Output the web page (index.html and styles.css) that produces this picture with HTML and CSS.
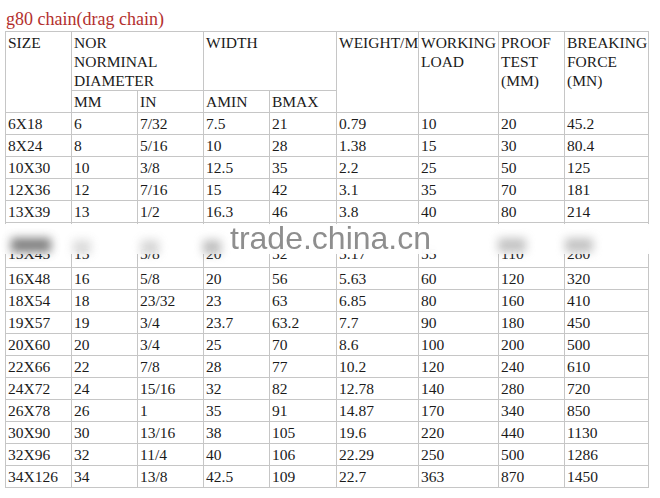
FILE: index.html
```html
<!DOCTYPE html>
<html>
<head>
<meta charset="utf-8">
<link rel="stylesheet" href="styles.css">
</head>
<body>
<div class="title">g80 chain(drag chain)</div>
<div class="sheet">
<table class="spec">
<colgroup>
<col class="c66"><col class="c66"><col class="c66"><col class="c66"><col class="c67"><col class="c82"><col class="c80"><col class="c66"><col class="c84">
</colgroup>
<tr class="h1">
<td rowspan="2">SIZE</td>
<td colspan="2">NOR<br>NORMINAL<br>DIAMETER</td>
<td colspan="2">WIDTH</td>
<td rowspan="2">WEIGHT/M</td>
<td rowspan="2">WORKING<br>LOAD</td>
<td rowspan="2">PROOF<br>TEST<br>(MM)</td>
<td rowspan="2">BREAKING<br>FORCE<br>(MN)</td>
</tr>
<tr class="h2"><td>MM</td><td>IN</td><td>AMIN</td><td>BMAX</td></tr>
<tr><td>6X18</td><td>6</td><td>7/32</td><td>7.5</td><td>21</td><td>0.79</td><td>10</td><td>20</td><td>45.2</td></tr>
<tr><td>8X24</td><td>8</td><td>5/16</td><td>10</td><td>28</td><td>1.38</td><td>15</td><td>30</td><td>80.4</td></tr>
<tr><td>10X30</td><td>10</td><td>3/8</td><td>12.5</td><td>35</td><td>2.2</td><td>25</td><td>50</td><td>125</td></tr>
<tr><td>12X36</td><td>12</td><td>7/16</td><td>15</td><td>42</td><td>3.1</td><td>35</td><td>70</td><td>181</td></tr>
<tr><td>13X39</td><td>13</td><td>1/2</td><td>16.3</td><td>46</td><td>3.8</td><td>40</td><td>80</td><td>214</td></tr>
<tr class="tall"><td>15X45</td><td>15</td><td>5/8</td><td>20</td><td>52</td><td>5.17</td><td>55</td><td>110</td><td>280</td></tr>
<tr><td>16X48</td><td>16</td><td>5/8</td><td>20</td><td>56</td><td>5.63</td><td>60</td><td>120</td><td>320</td></tr>
<tr><td>18X54</td><td>18</td><td>23/32</td><td>23</td><td>63</td><td>6.85</td><td>80</td><td>160</td><td>410</td></tr>
<tr><td>19X57</td><td>19</td><td>3/4</td><td>23.7</td><td>63.2</td><td>7.7</td><td>90</td><td>180</td><td>450</td></tr>
<tr><td>20X60</td><td>20</td><td>3/4</td><td>25</td><td>70</td><td>8.6</td><td>100</td><td>200</td><td>500</td></tr>
<tr><td>22X66</td><td>22</td><td>7/8</td><td>28</td><td>77</td><td>10.2</td><td>120</td><td>240</td><td>610</td></tr>
<tr><td>24X72</td><td>24</td><td>15/16</td><td>32</td><td>82</td><td>12.78</td><td>140</td><td>280</td><td>720</td></tr>
<tr><td>26X78</td><td>26</td><td>1</td><td>35</td><td>91</td><td>14.87</td><td>170</td><td>340</td><td>850</td></tr>
<tr><td>30X90</td><td>30</td><td>13/16</td><td>38</td><td>105</td><td>19.6</td><td>220</td><td>440</td><td>1130</td></tr>
<tr><td>32X96</td><td>32</td><td>11/4</td><td>40</td><td>106</td><td>22.29</td><td>250</td><td>500</td><td>1286</td></tr>
<tr><td>34X126</td><td>34</td><td>13/8</td><td>42.5</td><td>109</td><td>22.7</td><td>363</td><td>870</td><td>1450</td></tr>
</table>
<div class="band"></div>
<div class="blob b1"></div>
<div class="blob b2"></div>
<div class="blob b3"></div>
<div class="blob b4"></div>
<div class="blob b5"></div>
<div class="blob b6"></div>
<div class="mark">trade.china.cn</div>
</div>
</body>
</html>
```

FILE: styles.css
```css
html, body {
  margin: 0;
  padding: 0;
  background: #ffffff;
}
body {
  width: 660px;
  height: 498px;
  overflow: hidden;
  font-family: "Liberation Serif", "Times New Roman", serif;
}
.title {
  padding: 8px 0 0 6px;
  font-size: 18px;
  line-height: 22px;
  color: #b3302e;
}
.sheet {
  position: relative;
  margin: 1px 0 0 5px;
  width: 644px;
}
.spec {
  border-collapse: collapse;
  table-layout: fixed;
  width: 644px;
  font-size: 15.5px;
  line-height: 19px;
  color: #1a1a1a;
}
.spec td {
  border: 1px solid #c6c6c6;
  padding: 0 2px;
  vertical-align: middle;
  white-space: nowrap;
  overflow: hidden;
}
.c66 { width: 66px; }
.c67 { width: 67px; }
.c80 { width: 80px; }
.c82 { width: 82px; }
.c84 { width: 84px; }
.spec tr { height: 22px; }
.spec tr.h1 { height: 59px; }
.spec tr.h1 td {
  vertical-align: top;
  padding-top: 1px;
}
.spec tr.tall { height: 45px; }
.spec tr.tall td {
  vertical-align: bottom;
  padding-bottom: 4px;
}
.band {
  position: absolute;
  left: -5px;
  top: 193px;
  width: 660px;
  height: 30px;
  background: rgba(255, 255, 255, 0.9);
  backdrop-filter: blur(4px);
}
.blob {
  position: absolute;
  height: 14px;
  background: #8a8a8a;
  filter: blur(5px);
  opacity: 0.6;
}
.b1 { left: 6px; top: 207px; width: 40px; background: #555; opacity: 0.75; }
.b2 { left: 68px; top: 209px; width: 18px; opacity: 0.3; }
.b3 { left: 136px; top: 209px; width: 18px; opacity: 0.35; }
.b4 { left: 198px; top: 209px; width: 18px; opacity: 0.55; }
.b5 { left: 493px; top: 207px; width: 28px; opacity: 0.5; }
.b6 { left: 560px; top: 207px; width: 28px; opacity: 0.5; }
.mark {
  position: absolute;
  left: 225px;
  top: 191px;
  font-family: "Liberation Sans", Arial, sans-serif;
  font-size: 32px;
  line-height: 32px;
  color: #8e8e8e;
  white-space: nowrap;
}
```
